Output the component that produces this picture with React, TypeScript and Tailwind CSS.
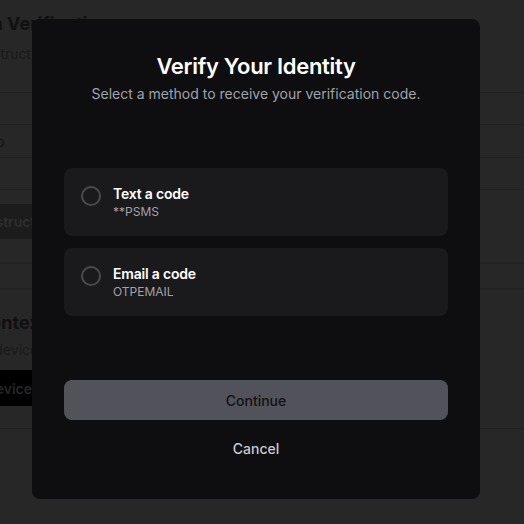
import { useState } from "react"

const methods = [
  { id: "sms", title: "Text a code", detail: "**PSMS" },
  { id: "email", title: "Email a code", detail: "OTPEMAIL" },
]

function BackgroundPage() {
  return (
    <div className="h-[524px] w-[524px] overflow-hidden bg-[#272727]">
      <div className="-ml-[120px] w-[644px]">
        <div className="pt-[12px]">
          <h1 className="-ml-[8px] whitespace-nowrap text-[18px] font-bold leading-[24px] text-[#101010]">
            Authentication Verification
          </h1>
          <p className="mt-[8px] pl-[30px] whitespace-nowrap text-[14px] leading-[20px] text-[#1a1a1a]">
            Follow the instructions below
          </p>
        </div>
        <div className="mt-[28px] border-t border-[#202020]">
          <div className="h-[32px] border-b border-[#202020]" />
          <div className="flex h-[33px] items-center border-b border-[#202020] whitespace-nowrap text-[14px] text-[#141414]">
            <span className="pl-[86px]">Setup</span>
          </div>
          <div className="h-[32px] border-b border-[#202020]" />
          <div className="h-[74px] border-b border-[#202020] pt-[14px]">
            <div className="ml-[91px] inline-flex h-[35px] w-[200px] items-center rounded-[4px] bg-[#1c1c1c] px-[12px] text-[14px] font-semibold text-[#2e2e2e]">
              Instructions
            </div>
          </div>
          <div className="h-[25px] border-b border-[#202020]" />
        </div>
        <div className="pt-[22px]">
          <h2 className="pl-[97px] whitespace-nowrap text-[18px] font-bold leading-[24px] text-[#101010]">
            Context
          </h2>
          <p className="mt-[5px] pl-[60px] whitespace-nowrap text-[14px] leading-[20px] text-[#1a1a1a]">
            Trusted device
          </p>
          <div className="mt-[10px] ml-[64px] inline-flex h-[36px] w-[200px] items-center rounded-[4px] bg-black px-[12px] text-[14px] font-semibold text-[#262626]">
            Add device
          </div>
        </div>
        <div className="mt-[22px] border-t border-[#202020]" />
      </div>
    </div>
  )
}

export default function App() {
  const [selected, setSelected] = useState<string | null>(null)

  return (
    <div className="relative h-[524px] w-[524px] overflow-hidden font-['Inter',sans-serif]">
      <BackgroundPage />
      <div className="absolute inset-0 flex items-start pl-8 pt-[19px]">
        <div className="flex w-[448px] flex-col rounded-[8px] bg-[#0e0e10] px-8 pt-[33px] pb-[31px]">
          <h2 className="text-center text-[22px] font-semibold leading-[28px] tracking-[-0.3px] text-white">
            Verify Your Identity
          </h2>
          <p className="mt-1 text-center text-[14px] leading-[20px] text-[#a1a1aa]">
            Select a method to receive your verification code.
          </p>

          <div className="mt-16 flex flex-col gap-3">
            {methods.map((m) => (
              <button
                key={m.id}
                onClick={() => setSelected(m.id)}
                className="flex items-start gap-3 rounded-[8px] bg-[#1a1a1c] px-[17px] py-4 text-left"
              >
                <span className="mt-[2px] flex h-5 w-5 shrink-0 items-center justify-center rounded-full border-2 border-[#4a4a51]">
                  {selected === m.id && <span className="h-2.5 w-2.5 rounded-full bg-white" />}
                </span>
                <span className="flex flex-col">
                  <span className="text-[14px] font-semibold leading-[20px] tracking-[-0.2px] text-white">{m.title}</span>
                  <span className="text-[12px] leading-[16px] text-[#a1a1aa]">{m.detail}</span>
                </span>
              </button>
            ))}
          </div>

          <button className="mt-16 h-10 rounded-[8px] bg-[#52525a] text-[14px] font-medium text-[#111113]">
            Continue
          </button>
          <button className="mt-2 h-10 text-[14px] font-medium text-[#cacace]">Cancel</button>
        </div>
      </div>
    </div>
  )
}
